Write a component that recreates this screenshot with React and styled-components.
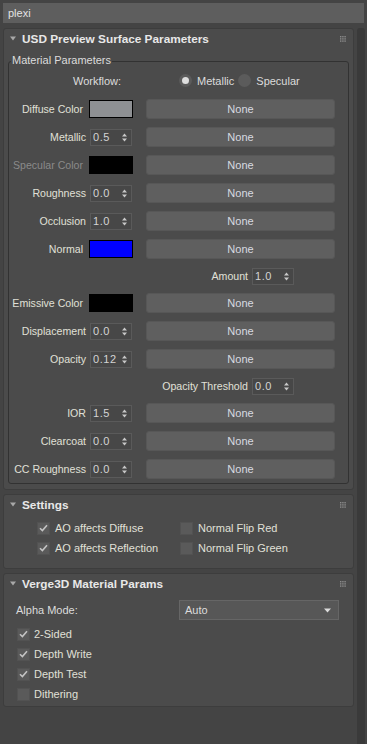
import React from 'react';
import styled, { createGlobalStyle } from 'styled-components';

const GlobalStyle = createGlobalStyle`
    html, body {
        margin: 0;
        padding: 0;
        background: #444444;
    }
    body {
        font-family: "Liberation Sans", Arial, sans-serif;
        font-size: 10.6px;
        color: #dcdcdc;
    }
`;

const Page = styled.div`
    height: 100vh;
    box-sizing: border-box;
    padding: 3px 2px 0 3px;
    display: flex;
    flex-direction: column;
    gap: 5px;
    overflow: hidden;
`;

const NameField = styled.div`
    height: 20px;
    width: 361px;
    box-sizing: border-box;
    background: #5e5e5e;
    display: flex;
    align-items: center;
    padding-left: 5px;
    font-size: 11px;
    color: #e2e2e2;
`;

const Body = styled.div`
    flex: 1;
    display: flex;
    gap: 3px;
`;

const Column = styled.div`
    width: 351px;
    display: flex;
    flex-direction: column;
    gap: 4px;
`;

const ScrollTrack = styled.div`
    width: 8px;
    background: #3a3a3a;
    border-radius: 3px 3px 0 0;
`;

const Rollout = styled.section`
    background: #4b4b4b;
    border: 1px solid #3d3d3d;
    border-radius: 3px;
    padding-bottom: ${p => p.$pb || 0}px;
`;

const RollHeader = styled.div`
    height: 19px;
    display: flex;
    align-items: center;
    padding: 0 7px 0 6px;
`;

const Title = styled.span`
    margin-left: 6px;
    font-weight: bold;
    font-size: 11.8px;
    color: #e8e8e8;
`;

const Handle = styled.svg`
    margin-left: auto;
`;

function Header({ title }) {
    return (
        <RollHeader>
            <svg width="6" height="5" viewBox="0 0 6 5">
                <path d="M0 0.5 H6 L3 4.5 Z" fill="#a8a8a8" />
            </svg>
            <Title>{title}</Title>
            <Handle width="6" height="6" viewBox="0 0 6 6">
                {[0, 1, 2].map(r => [0, 1, 2].map(c => (
                    <rect key={`${r}${c}`} x={c * 2.2} y={r * 2.2} width="1.4" height="1.4" fill="#8c8c8c" />
                )))}
            </Handle>
        </RollHeader>
    );
}

const GroupBox = styled.div`
    position: relative;
    margin: 13px 4px 0;
    border: 1px solid #323232;
    border-radius: 3px;
    padding-top: 4px;
`;

const Legend = styled.span`
    position: absolute;
    top: -8px;
    left: 2px;
    padding: 0 1px;
    background: #4b4b4b;
    font-size: 11px;
    color: #dcdcdc;
`;

const WorkflowRow = styled.div`
    height: 29px;
    display: flex;
    align-items: center;
    padding-left: 64px;
`;

const WorkflowLabel = styled.span`
    width: 106px;
    font-size: 11px;
`;

const RadioItem = styled.label`
    display: flex;
    align-items: center;
    gap: 5px;
    margin-right: 4px;
    font-size: 11px;
`;

const RadioDot = styled.span`
    width: 13px;
    height: 13px;
    border-radius: 50%;
    background: #5b5b5b;
    display: flex;
    align-items: center;
    justify-content: center;
    &::after {
        content: '';
        width: 7px;
        height: 7px;
        border-radius: 50%;
        background: ${p => (p.$on ? '#dedede' : 'transparent')};
    }
`;

const Row = styled.div`
    height: ${p => p.$h || 28}px;
    display: flex;
    align-items: center;
`;

const Label = styled.span`
    width: ${p => p.$w || 77}px;
    box-sizing: border-box;
    text-align: right;
    padding-right: ${p => p.$pr || 0}px;
    color: ${p => (p.$dim ? '#8a8a8a' : '#e0e0d8')};
    white-space: nowrap;
`;

const Control = styled.div`
    width: 43px;
    margin-left: 4px;
    display: flex;
`;

const Swatch = styled.div`
    width: 44px;
    height: 18px;
    box-sizing: border-box;
    margin-left: -1px;
    border: 1px solid #000;
    background: ${p => p.$color};
`;

const SpinBox = styled.div`
    width: 42px;
    height: 17px;
    box-sizing: border-box;
    border: 1px solid #5a5a5a;
    background: #474747;
    display: flex;
    align-items: center;
    padding: 0 4px 0 2px;
    font-size: 11px;
    letter-spacing: 0.6px;
    color: #d4d4d4;
    & svg {
        margin-left: auto;
    }
`;

const MapButton = styled.button`
    margin-left: 13px;
    width: 189px;
    height: 20px;
    background: #5f5f5f;
    border: 1px solid #575757;
    border-radius: 3px;
    color: #d8dae0;
    font-family: inherit;
    font-size: 11px;
    padding: 0;
`;

function Spinner({ value }) {
    return (
        <SpinBox>
            {value}
            <svg width="5" height="9" viewBox="0 0 5 9">
                <path d="M0 3.5 L2.5 0.5 L5 3.5 Z M0 5.5 L2.5 8.5 L5 5.5 Z" fill="#c8c8c8" />
            </svg>
        </SpinBox>
    );
}

function ParamRow({ label, color, value, dim }) {
    return (
        <Row>
            <Label $dim={dim} $pr={color ? 3 : 0}>{label}</Label>
            <Control>{color ? <Swatch $color={color} /> : <Spinner value={value} />}</Control>
            <MapButton>None</MapButton>
        </Row>
    );
}

function SubRow({ label, value }) {
    return (
        <Row $h={26}>
            <Label $w={239}>{label}</Label>
            <Control><Spinner value={value} /></Control>
        </Row>
    );
}

const CheckGrid = styled.div`
    display: grid;
    grid-template-columns: ${p => p.$cols || '1fr'};
    grid-auto-rows: 20px;
    margin-top: ${p => p.$mt || 0}px;
    padding-left: ${p => p.$pl}px;
`;

const CheckItem = styled.label`
    display: flex;
    align-items: center;
    gap: ${p => p.$gap || 5}px;
    font-size: 11px;
    color: #e0e0d8;
`;

const Box = styled.span`
    width: 13px;
    height: 13px;
    box-sizing: border-box;
    background: #5a5a5a;
    border: 1px solid #525252;
    display: flex;
    align-items: center;
    justify-content: center;
`;

function Check({ on, children, gap }) {
    return (
        <CheckItem $gap={gap}>
            <Box>
                {on && (
                    <svg width="9" height="8" viewBox="0 0 9 8">
                        <path d="M1 4.2 L3.4 6.6 L8 1.2" stroke="#c4c4c4" strokeWidth="1.6" fill="none" />
                    </svg>
                )}
            </Box>
            {children}
        </CheckItem>
    );
}

const AlphaRow = styled.div`
    height: 22px;
    margin-top: 6px;
    display: flex;
    align-items: center;
    padding-left: 12px;
    font-size: 11px;
`;

const Select = styled.div`
    margin-left: auto;
    margin-right: 14px;
    width: 160px;
    height: 20px;
    box-sizing: border-box;
    background: #575757;
    border: 1px solid #666666;
    display: flex;
    align-items: center;
    padding: 0 7px 0 5px;
    font-size: 11px;
    & svg {
        margin-left: auto;
    }
`;

export default function App() {
    return (
        <>
            <GlobalStyle />
            <Page>
                <NameField>plexi</NameField>
                <Body>
                    <Column>
                        <Rollout $pb={5}>
                            <Header title="USD Preview Surface Parameters" />
                            <GroupBox>
                                <Legend>Material Parameters</Legend>
                                <WorkflowRow>
                                    <WorkflowLabel>Workflow:</WorkflowLabel>
                                    <RadioItem><RadioDot $on />Metallic</RadioItem>
                                    <RadioItem><RadioDot />Specular</RadioItem>
                                </WorkflowRow>
                                <ParamRow label="Diffuse Color" color="#8e9093" />
                                <ParamRow label="Metallic" value="0.5" />
                                <ParamRow label="Specular Color" color="#000000" dim />
                                <ParamRow label="Roughness" value="0.0" />
                                <ParamRow label="Occlusion" value="1.0" />
                                <ParamRow label="Normal" color="#0000ff" />
                                <SubRow label="Amount" value="1.0" />
                                <ParamRow label="Emissive Color" color="#000000" />
                                <ParamRow label="Displacement" value="0.0" />
                                <ParamRow label="Opacity" value="0.12" />
                                <SubRow label="Opacity Threshold" value="0.0" />
                                <ParamRow label="IOR" value="1.5" />
                                <ParamRow label="Clearcoat" value="0.0" />
                                <ParamRow label="CC Roughness" value="0.0" />
                            </GroupBox>
                        </Rollout>
                        <Rollout $pb={10}>
                            <Header title="Settings" />
                            <CheckGrid $cols="143px 1fr" $pl={33} $mt={4}>
                                <Check on>AO affects Diffuse</Check>
                                <Check>Normal Flip Red</Check>
                                <Check on>AO affects Reflection</Check>
                                <Check>Normal Flip Green</Check>
                            </CheckGrid>
                        </Rollout>
                        <Rollout $pb={2}>
                            <Header title="Verge3D Material Params" />
                            <AlphaRow>
                                Alpha Mode:
                                <Select>
                                    Auto
                                    <svg width="7" height="5" viewBox="0 0 7 5">
                                        <path d="M0 0.5 H7 L3.5 4.5 Z" fill="#dcdcdc" />
                                    </svg>
                                </Select>
                            </AlphaRow>
                            <CheckGrid $pl={13} $mt={3}>
                                <Check on gap={4}>2-Sided</Check>
                                <Check on gap={4}>Depth Write</Check>
                                <Check on gap={4}>Depth Test</Check>
                                <Check gap={4}>Dithering</Check>
                            </CheckGrid>
                        </Rollout>
                    </Column>
                    <ScrollTrack />
                </Body>
            </Page>
        </>
    );
}
